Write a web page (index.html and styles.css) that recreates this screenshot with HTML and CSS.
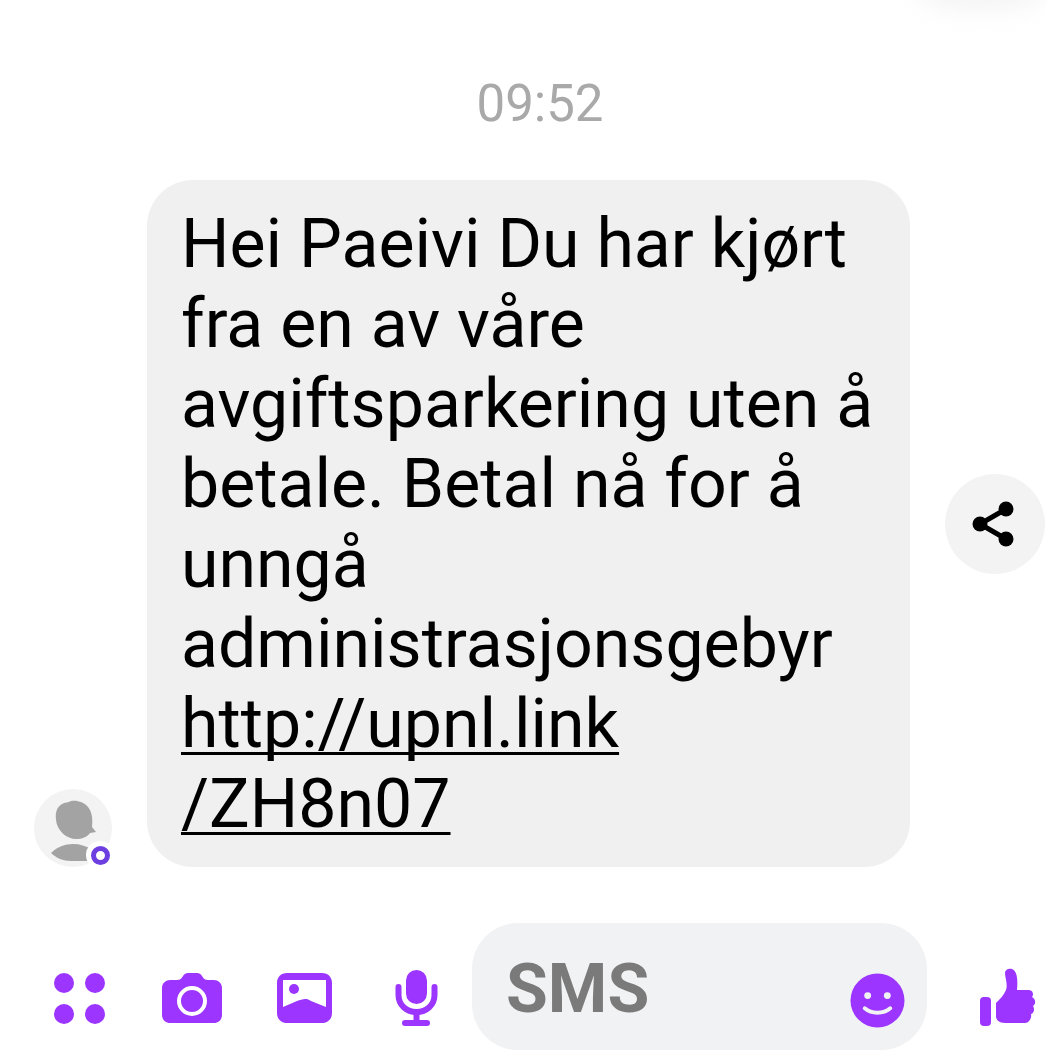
FILE: index.html
```html
<!DOCTYPE html>
<html lang="en">
<head>
    <meta charset="UTF-8">
    <meta name="viewport" content="width=device-width, initial-scale=1.0">
    <title>SMS</title>
    <link rel="stylesheet" href="styles.css">
</head>
<body>
    <div class="top-shadow"></div>
    <div class="time">09:52</div>

    <div class="message-row">
        <div class="avatar">
            <svg class="avatar-person" width="78" height="78" viewBox="0 0 78 78">
                <path d="M22 31c-1-8 1-13 6-16 3-2 6-1 9-3 6-1 13 1 17 6 4 5 5 12 4 20l4 5-6 1c-3 4-8 6-14 6-9 0-19-8-20-19z" fill="#a3a3a3"/>
                <path d="M17 64c6-6 14-9 22-9 7 0 13 2 18 5l-4 12H37c-8 0-15-3-20-8z" fill="#a3a3a3"/>
            </svg>
            <div class="avatar-badge"><div class="avatar-badge-ring"></div></div>
        </div>
        <div class="bubble">
            Hei Paeivi Du har kjørt fra en av våre avgiftsparkering uten å betale. Betal nå for å unngå administrasjonsgebyr
            <a class="sms-link" href="#">http://upnl.link<br>/ZH8n07</a>
        </div>
        <div class="share-btn">
            <svg width="46" height="46" viewBox="0 0 46 46">
                <path d="M34 8L8 23l26 15" fill="none" stroke="#000" stroke-width="5"/>
                <circle cx="34" cy="8" r="7.500"/>
                <circle cx="8" cy="23" r="7.500"/>
                <circle cx="34" cy="38" r="7.500"/>
            </svg>
        </div>
    </div>

    <div class="composer">
        <svg class="tool tool-apps" width="51" height="60" viewBox="0 0 51 60">
            <circle cx="10" cy="16" r="10"/>
            <circle cx="41" cy="16" r="10"/>
            <circle cx="10" cy="47" r="10"/>
            <circle cx="41" cy="47" r="10"/>
        </svg>
        <svg class="tool tool-camera" width="60" height="60" viewBox="0 0 60 60">
            <path d="M8 13h7c3 0 4-1 6-4 1-2 3-3 5-3h9c2 0 4 1 5 3 2 3 3 4 6 4h6c4 0 8 3 8 8v27c0 5-4 8-8 8H8c-4 0-8-3-8-8V21c0-5 4-8 8-8z"/>
            <circle cx="30" cy="34" r="13" fill="none" stroke="#fff" stroke-width="4"/>
        </svg>
        <svg class="tool tool-image" width="55" height="60" viewBox="0 0 55 60">
            <path fill-rule="evenodd" d="M10 6h35c6 0 10 4 10 10v30c0 6-4 10-10 10H10C4 56 0 52 0 46V16C0 10 4 6 10 6zM6 13v27l14-6c5-2 10-3.500 14 0l15 6V13z"/>
            <circle cx="17" cy="22" r="5"/>
        </svg>
        <svg class="tool tool-mic" width="43" height="60" viewBox="0 0 43 60">
            <rect x="11" y="3" width="21" height="34" rx="10.500"/>
            <path d="M3.500 20v8c0 10 8 17 18 17s18-7 18-17v-8" fill="none" stroke="#9b35ff" stroke-width="6" stroke-linecap="round"/>
            <rect x="18.500" y="44" width="6" height="12"/>
            <rect x="7" y="53" width="28" height="6" rx="3"/>
        </svg>
        <div class="input-pill">
            <span class="input-text">SMS</span>
            <svg class="smiley" width="55" height="55" viewBox="0 0 56 56">
                <circle cx="28" cy="28" r="27.500" fill="#9b35ff"/>
                <circle cx="18" cy="23" r="3.500" fill="#f1f2f4"/>
                <circle cx="38" cy="23" r="3.500" fill="#f1f2f4"/>
                <path d="M15 36c7 6 19 6 26 0" fill="none" stroke="#f1f2f4" stroke-width="4" stroke-linecap="round"/>
            </svg>
        </div>
        <svg class="tool tool-like" width="58" height="60" viewBox="0 0 58 60">
            <rect x="1" y="30" width="11" height="29" rx="4"/>
            <path d="M17 36C21 32 25 28 27 23C29 18 26 10 26 6C26 2 31 1 33 2C38 4 39 12 38 23H50C54 23 55 28 53 30C57 32 57 37 54 39C56 42 55 46 52 47C53 51 50 56 46 56H26C20 56 17 53 17 49Z"/>
        </svg>
    </div>
</body>
</html>
```

FILE: styles.css
```css
html, body {
    margin: 0;
    padding: 0;
}
body {
    width: 1047px;
    height: 1060px;
    overflow: hidden;
    background-color: #fff;
    font-family: Roboto, "Liberation Sans", sans-serif;
    color: #000;
}
.top-shadow {
    position: absolute;
    top: -30px;
    right: 0;
    width: 130px;
    height: 40px;
    border-radius: 50%;
    background-color: #f4f4f4;
    filter: blur(12px);
}
.time {
    box-sizing: border-box;
    height: 180px;
    padding-top: 75px;
    padding-left: 33px;
    line-height: 58px;
    text-align: center;
    font-size: 51px;
    color: #a9a9a9;
}
.message-row {
    display: flex;
    align-items: center;
    padding-left: 34px;
}
.avatar {
    position: relative;
    align-self: flex-end;
    width: 78px;
    height: 78px;
    border-radius: 50%;
    background-color: #f3f3f3;
    flex-shrink: 0;
}
.avatar-person {
    display: block;
}
.avatar-badge {
    position: absolute;
    right: -2px;
    bottom: -2px;
    width: 28px;
    height: 28px;
    border-radius: 50%;
    background-color: #fff;
    display: flex;
    align-items: center;
    justify-content: center;
}
.avatar-badge-ring {
    width: 9px;
    height: 9px;
    border: 5px solid #6d3fe0;
    border-radius: 50%;
}
.bubble {
    box-sizing: border-box;
    width: 763px;
    height: 687px;
    margin-left: 35px;
    padding: 24px 34px 0;
    border-radius: 46px;
    background-color: #f0f0f1;
    font-size: 68px;
    line-height: 80px;
    flex-shrink: 0;
}
.sms-link {
    color: #000;
    text-decoration: underline;
    text-decoration-thickness: 3px;
    text-underline-offset: 5px;
    text-decoration-skip-ink: none;
}
.share-btn {
    width: 100px;
    height: 100px;
    margin-left: 35px;
    border-radius: 50%;
    background-color: #f3f3f3;
    display: flex;
    align-items: center;
    justify-content: center;
    flex-shrink: 0;
}
.composer {
    display: flex;
    align-items: flex-end;
    margin-top: 56px;
    padding-left: 54px;
}
.tool {
    display: block;
    margin-bottom: 23px;
    fill: #9b35ff;
    flex-shrink: 0;
}
.tool-camera {
    margin-left: 57px;
}
.tool-image {
    margin-left: 55px;
}
.tool-mic {
    margin-left: 63px;
}
.tool-like {
    margin-left: 52px;
}
.input-pill {
    box-sizing: border-box;
    display: flex;
    justify-content: space-between;
    width: 455px;
    height: 127px;
    margin-left: 34px;
    padding: 27px 22px 0 34px;
    border-radius: 46px;
    background-color: #f1f2f4;
    flex-shrink: 0;
}
.input-text {
    font-size: 68px;
    font-weight: bold;
    line-height: 78px;
    color: #7a7a7a;
}
.smiley {
    display: block;
    margin-top: 23px;
}
```
